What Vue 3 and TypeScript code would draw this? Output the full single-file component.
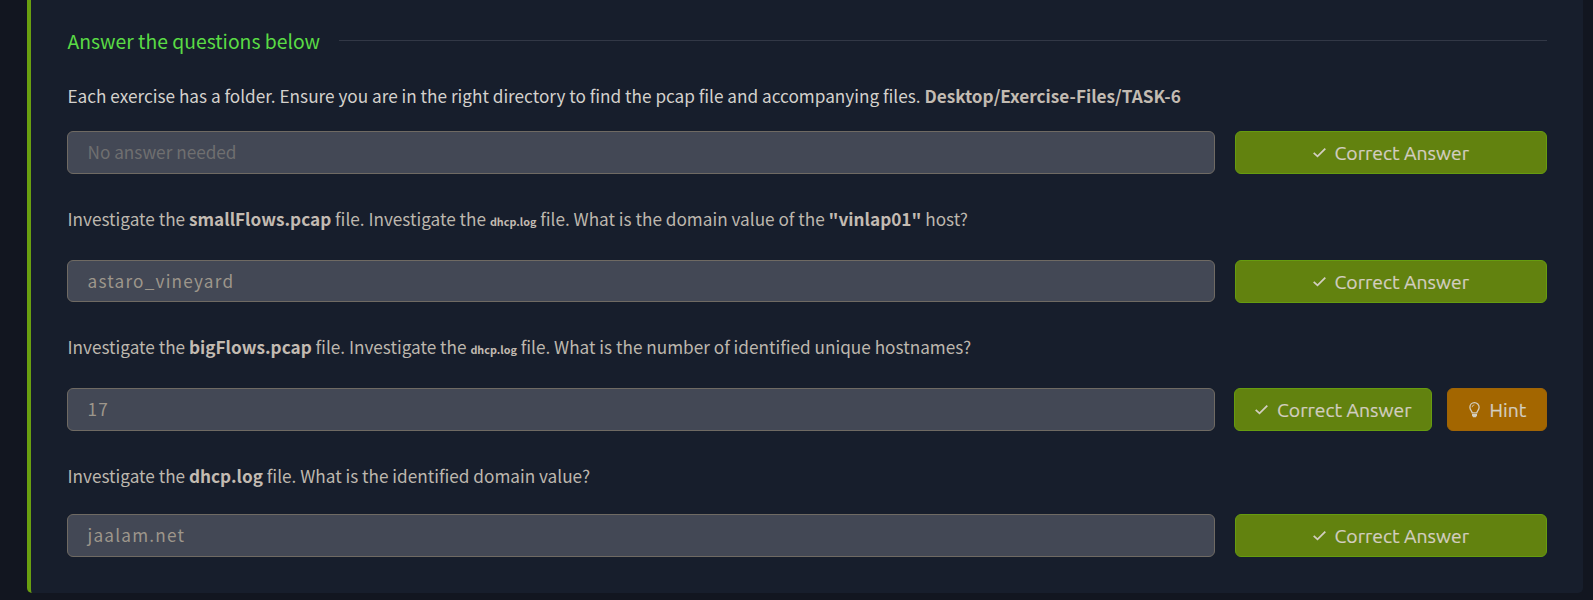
<script setup lang="ts">
interface Part {
  text: string
  kind?: 'bold' | 'file'
}

interface Question {
  id: string
  parts: Part[]
  answer?: string
  hint?: boolean
}

const questions: Question[] = [
  {
    id: 'q1',
    parts: [
      { text: 'Each exercise has a folder. Ensure you are in the right directory to find the pcap file and accompanying files. ' },
      { text: 'Desktop/Exercise-Files/TASK-6', kind: 'bold' },
    ],
  },
  {
    id: 'q2',
    parts: [
      { text: 'Investigate the ' },
      { text: 'smallFlows.pcap', kind: 'bold' },
      { text: ' file. Investigate the ' },
      { text: 'dhcp.log', kind: 'file' },
      { text: ' file. What is the domain value of the ' },
      { text: '"vinlap01"', kind: 'bold' },
      { text: ' host?' },
    ],
    answer: 'astaro_vineyard',
  },
  {
    id: 'q3',
    parts: [
      { text: 'Investigate the ' },
      { text: 'bigFlows.pcap', kind: 'bold' },
      { text: ' file. Investigate the ' },
      { text: 'dhcp.log', kind: 'file' },
      { text: ' file. What is the number of identified unique hostnames?' },
    ],
    answer: '17',
    hint: true,
  },
  {
    id: 'q4',
    parts: [
      { text: 'Investigate the ' },
      { text: 'dhcp.log', kind: 'bold' },
      { text: ' file. What is the identified domain value?' },
    ],
    answer: 'jaalam.net',
  },
]
</script>

<template>
  <div class="page">
    <main class="card">
      <header class="heading">
        <h2>Answer the questions below</h2>
        <span class="rule"></span>
      </header>

      <section v-for="q in questions" :key="q.id" class="question" :class="q.id">
        <p class="prompt"><span v-for="(part, i) in q.parts" :key="i" :class="part.kind">{{ part.text }}</span></p>
        <div class="row">
          <div class="field" :class="{ empty: !q.answer }">{{ q.answer ?? 'No answer needed' }}</div>
          <div class="actions">
            <button class="btn correct" type="button">
              <svg class="check" viewBox="0 0 13 11" aria-hidden="true">
                <path d="M0.7 5.9 4.5 9.3 12.3 1.6" />
              </svg>
              <span>Correct Answer</span>
            </button>
            <button v-if="q.hint" class="btn hint" type="button">
              <svg class="bulb" viewBox="0 0 11 16" aria-hidden="true">
                <path class="glass" d="M3.2 10.9C3 9.2 0.9 8.2 0.9 5.3a4.6 4.6 0 0 1 9.2 0C10.1 8.2 8 9.2 7.8 10.9Z" />
                <path class="shine" d="M3.1 5.2a2.4 2.4 0 0 1 2.3-2.3" />
                <path class="base" d="M3 12h5v1.6L6.9 15.2H4.1L3 13.6Z" />
              </svg>
              <span>Hint</span>
            </button>
          </div>
        </div>
      </section>
    </main>
  </div>
</template>

<style>
body {
  margin: 0;
  background: #12161f;
}
</style>

<style scoped>
.page {
  box-sizing: border-box;
  height: 600px;
  padding: 0 10px 7px 27px;
  overflow: hidden;
  background: #121620;
  font-family: "Noto Sans CJK SC", "Noto Sans", sans-serif;
}
.card {
  box-sizing: border-box;
  height: 593px;
  padding: 26px 36px 0;
  border-left: 4px solid #699f10;
  border-radius: 0 0 5px 5px;
  background: #171e2c;
}
.heading {
  display: flex;
  align-items: center;
  height: 29px;
}
h2 {
  margin: 1px 18.5px 0 0;
  padding-left: 0.5px;
  color: #5adb45;
  font-size: 19.35px;
  font-weight: 400;
  line-height: 30px;
  white-space: nowrap;
}
.rule {
  flex: 1;
  height: 1px;
  background: #323846;
}
.question {
  display: flex;
  flex-direction: column;
}
.prompt {
  margin: 0;
  padding-left: 0.5px;
  color: #bdb7ae;
  font-size: 17.2px;
  line-height: 28px;
  white-space: pre;
}
.q1 .prompt { color: #d4d1cc; }
.bold { color: #c3bbb2; font-weight: 700; }
.file { color: #c3bbb2; font-size: 10.8px; font-weight: 700; line-height: 1; }
.q1 { padding-top: 27px; }
.q2 { padding-top: 31px; }
.q3 { padding-top: 30px; }
.q4 { padding-top: 31px; }
.row {
  display: flex;
  gap: 20px;
  height: 43px;
  margin-top: 27px;
}
.q1 .row { margin-top: 21px; }
.q4 .row { margin-top: 24px; }
.field {
  box-sizing: border-box;
  flex: 1;
  height: 43px;
  padding-left: 19.5px;
  border: 1px solid #6f6a63;
  border-radius: 6px;
  background: #434855;
  color: #9d968b;
  font-size: 17.2px;
  letter-spacing: 1.2px;
  line-height: 39px;
}
.q2 .field { height: 42px; }
.field.empty { color: #6f6f70; letter-spacing: 0; }
.actions {
  display: flex;
  gap: 15px;
  width: 312px;
}
.q3 .row { gap: 19px; }
.q3 .actions { width: 313px; }
.btn {
  box-sizing: border-box;
  display: flex;
  align-items: center;
  justify-content: center;
  height: 43px;
  padding: 1px 0 0;
  border: 1px solid #669c0f;
  border-radius: 6px;
  background: #62820f;
  color: #d3cec0;
  font-family: Ubuntu, "Noto Sans", sans-serif;
  font-size: 19.35px;
  line-height: 40px;
  white-space: nowrap;
  -webkit-text-stroke: 0.2px #d3cec0;
}
.correct { flex: 1; }
.q3 .btn { padding-left: 1px; }
.hint {
  width: 100px;
  border-color: #a06406;
  background: #a36600;
}
.check {
  width: 13px;
  height: 11px;
  margin: 0 8.5px 2px 0;
  fill: none;
  stroke: #d3cec0;
  stroke-width: 1.8;
}
.bulb {
  width: 11px;
  height: 16px;
  margin-right: 10px;
  fill: none;
  stroke: #d3cec0;
  stroke-width: 1.3;
}
.shine { stroke-width: 0.8; }
.base { fill: #d3cec0; stroke: none; }
</style>
